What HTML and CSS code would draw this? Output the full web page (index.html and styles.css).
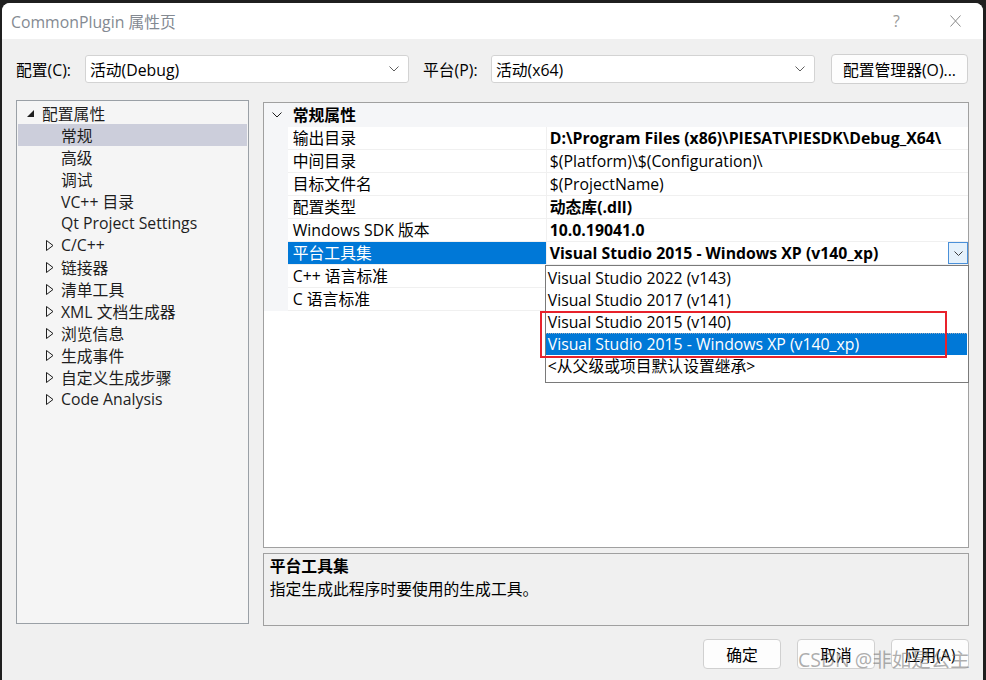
FILE: index.html
```html
<!DOCTYPE html>
<html lang="zh-CN">
<head>
<meta charset="utf-8">
<title>CommonPlugin 属性页</title>
<link rel="stylesheet" href="styles.css">
</head>
<body>
<div class="screen">
  <div class="window">
    <div class="titlebar">
      <span class="title">CommonPlugin 属性页</span>
      <span class="help">?</span>
      <span class="close"><svg width="11" height="12" viewBox="0 0 11 12"><path d="M0.5 0.5L10.5 11.5M10.5 0.5L0.5 11.5" stroke="#8a8a8a" stroke-width="1" fill="none"/></svg></span>
    </div>
    <div class="content">
      <div class="configbar">
        <span class="lbl lbl1">配置(C):</span>
        <div class="combo"><span>活动(Debug)</span><svg class="chev" width="10" height="6" viewBox="0 0 10 6"><path d="M0.5 0.5L5 5L9.5 0.5" stroke="#5f5f5f" fill="none"/></svg></div>
        <span class="lbl lbl2">平台(P):</span>
        <div class="combo"><span>活动(x64)</span><svg class="chev" width="10" height="6" viewBox="0 0 10 6"><path d="M0.5 0.5L5 5L9.5 0.5" stroke="#5f5f5f" fill="none"/></svg></div>
        <button class="btn mgr">配置管理器(O)...</button>
      </div>
      <div class="main">
        <div class="tree">
          <div class="node root"><svg class="exp" width="7" height="7" viewBox="0 0 7 7"><polygon points="7,0 7,7 0,7" fill="#1e1e1e"/></svg><span>配置属性</span></div>
          <div class="node leaf sel"><span>常规</span></div>
          <div class="node leaf"><span>高级</span></div>
          <div class="node leaf"><span>调试</span></div>
          <div class="node leaf"><span>VC++ 目录</span></div>
          <div class="node leaf"><span>Qt Project Settings</span></div>
          <div class="node child"><svg class="col" width="8" height="11" viewBox="0 0 8 11"><polygon points="0.5,0.5 7,5.5 0.5,10.5" fill="none" stroke="#1e1e1e"/></svg><span>C/C++</span></div>
          <div class="node child"><svg class="col" width="8" height="11" viewBox="0 0 8 11"><polygon points="0.5,0.5 7,5.5 0.5,10.5" fill="none" stroke="#1e1e1e"/></svg><span>链接器</span></div>
          <div class="node child"><svg class="col" width="8" height="11" viewBox="0 0 8 11"><polygon points="0.5,0.5 7,5.5 0.5,10.5" fill="none" stroke="#1e1e1e"/></svg><span>清单工具</span></div>
          <div class="node child"><svg class="col" width="8" height="11" viewBox="0 0 8 11"><polygon points="0.5,0.5 7,5.5 0.5,10.5" fill="none" stroke="#1e1e1e"/></svg><span>XML 文档生成器</span></div>
          <div class="node child"><svg class="col" width="8" height="11" viewBox="0 0 8 11"><polygon points="0.5,0.5 7,5.5 0.5,10.5" fill="none" stroke="#1e1e1e"/></svg><span>浏览信息</span></div>
          <div class="node child"><svg class="col" width="8" height="11" viewBox="0 0 8 11"><polygon points="0.5,0.5 7,5.5 0.5,10.5" fill="none" stroke="#1e1e1e"/></svg><span>生成事件</span></div>
          <div class="node child"><svg class="col" width="8" height="11" viewBox="0 0 8 11"><polygon points="0.5,0.5 7,5.5 0.5,10.5" fill="none" stroke="#1e1e1e"/></svg><span>自定义生成步骤</span></div>
          <div class="node child"><svg class="col" width="8" height="11" viewBox="0 0 8 11"><polygon points="0.5,0.5 7,5.5 0.5,10.5" fill="none" stroke="#1e1e1e"/></svg><span>Code Analysis</span></div>
        </div>
        <div class="right">
          <div class="grid">
            <div class="ghead"><span class="gutter-h"><svg width="10" height="6" viewBox="0 0 10 6"><path d="M0.5 0.5L5 5L9.5 0.5" stroke="#1e1e1e" fill="none"/></svg></span><span class="gtitle">常规属性</span></div>
            <div class="grow"><span class="gut"></span><span class="gname">输出目录</span><span class="gval b">D:\Program Files (x86)\PIESAT\PIESDK\Debug_X64\</span></div>
            <div class="grow"><span class="gut"></span><span class="gname">中间目录</span><span class="gval">$(Platform)\$(Configuration)\</span></div>
            <div class="grow"><span class="gut"></span><span class="gname">目标文件名</span><span class="gval">$(ProjectName)</span></div>
            <div class="grow"><span class="gut"></span><span class="gname">配置类型</span><span class="gval b">动态库(.dll)</span></div>
            <div class="grow"><span class="gut"></span><span class="gname">Windows SDK 版本</span><span class="gval b">10.0.19041.0</span></div>
            <div class="grow active"><span class="gut"></span><span class="gname">平台工具集</span><span class="gval b"><span class="vtext">Visual Studio 2015 - Windows XP (v140_xp)</span><span class="ddbtn"><svg width="9" height="5" viewBox="0 0 9 5"><path d="M0.5 0.5L4.5 4.5L8.5 0.5" stroke="#3c3c3c" fill="none"/></svg></span></span></div>
            <div class="grow"><span class="gut"></span><span class="gname">C++ 语言标准</span><span class="gval"></span></div>
            <div class="grow"><span class="gut"></span><span class="gname">C 语言标准</span><span class="gval"></span></div>
            <div class="ddlist">
              <div class="opt">Visual Studio 2022 (v143)</div>
              <div class="opt">Visual Studio 2017 (v141)</div>
              <div class="opt">Visual Studio 2015 (v140)</div>
              <div class="opt on">Visual Studio 2015 - Windows XP (v140_xp)</div>
              <div class="opt">&lt;从父级或项目默认设置继承&gt;</div>
            </div>
          </div>
          <div class="desc">
            <div class="dtitle">平台工具集</div>
            <div class="dtext">指定生成此程序时要使用的生成工具。</div>
          </div>
        </div>
      </div>
      <div class="buttons">
        <button class="btn act">确定</button>
        <button class="btn act">取消</button>
        <button class="btn act">应用(A)</button>
      </div>
    </div>
  </div>
  <div class="redbox"></div>
  <div class="watermark">CSDN @非如是公主</div>
</div>
</body>
</html>
```

FILE: styles.css
```css
* { box-sizing: border-box; }
html, body { margin: 0; padding: 0; }
body {
  background: #1f1f1f;
  font-family: "Open Sans", "Noto Sans CJK SC", sans-serif;
  font-size: 15.8px;
  color: #000;
  overflow: hidden;
}
.screen {
  position: relative;
  width: 986px;
  height: 680px;
  padding: 3px 3px 0 2px;
}
.window {
  width: 981px;
  height: 677px;
  background: #f0f0f0;
  border-radius: 8px 8px 0 0;
  overflow: hidden;
}
.titlebar {
  height: 36px;
  background: #fff;
  display: flex;
  align-items: center;
  padding-left: 9px;
  color: #848a92;
}
.title { flex: 1; }
.help { color: #9a9a9a; width: 57px; }
.close { width: 33px; display: flex; }
.content {
  padding: 15px 14px 0 14px;
}
.configbar {
  display: flex;
  align-items: center;
  height: 30px;
}
.lbl { white-space: nowrap; }
.lbl1 { width: 69px; }
.lbl2 { width: 68px; margin-left: 14px; }
.combo {
  width: 324px;
  height: 28px;
  background: #fff;
  border: 1px solid #d3d3d3;
  border-radius: 3px;
  display: flex;
  align-items: center;
  justify-content: space-between;
  padding: 0 9px 0 4px;
}
.btn {
  font-family: inherit;
  font-size: 15.8px;
  color: #000;
  background: #fdfdfd;
  border: 1px solid #d0d0d0;
  border-radius: 4px;
  height: 30px;
  padding: 0;
}
.mgr { width: 137px; margin-left: 16px; }
.main {
  display: flex;
  margin-top: 16px;
  height: 526px;
}
.tree {
  width: 233px;
  height: 524px;
  background: #f5f5f5;
  border: 1px solid #9aa0a6;
  padding: 1px 1px 0;
  color: #1e1e1e;
}
.node {
  height: 22px;
  display: flex;
  align-items: center;
  white-space: nowrap;
}
.root { padding-left: 9px; }
.root .exp { margin-right: 8px; }
.leaf { padding-left: 43px; }
.child { padding-left: 28px; }
.child .col { margin-right: 7px; }
.sel { background: #cccedb; }
.right {
  margin-left: 14px;
  width: 707px;
  display: flex;
  flex-direction: column;
}
.grid {
  position: relative;
  margin-top: 2px;
  height: 446px;
  background: #fff;
  border: 1px solid #a0a0a0;
}
.ghead {
  height: 24px;
  background: #f5f6f8;
  display: flex;
  align-items: center;
}
.gutter-h {
  width: 24px;
  display: flex;
  justify-content: center;
  padding-left: 2px;
}
.gtitle { font-weight: 700; padding-left: 5px; line-height: 22px; }
.grow {
  height: 23px;
  display: flex;
}
.gut { width: 24px; background: #f5f6f8; }
.gname {
  width: 259px;
  padding-left: 5px;
  line-height: 22px;
  border-bottom: 1px solid #f0f0f0;
  border-right: 1px solid #f0f0f0;
  white-space: nowrap;
}
.gval {
  flex: 1;
  padding-left: 3px;
  line-height: 22px;
  border-bottom: 1px solid #f0f0f0;
  white-space: nowrap;
  display: flex;
}
.b { font-weight: 700; }
.active .gname { background: #0078d7; color: #fff; }
.vtext { flex: 1; }
.ddbtn {
  width: 20px;
  height: 22px;
  border: 1px solid #4a90d9;
  background: #e5f1fb;
  display: flex;
  align-items: center;
  justify-content: center;
}
.ddlist {
  position: absolute;
  left: 281px;
  top: 162px;
  width: 424px;
  height: 118px;
  background: #fff;
  border: 1px solid #7a7a7a;
  padding-top: 1px;
}
.opt {
  height: 22px;
  line-height: 22px;
  padding-left: 2px;
  white-space: nowrap;
  margin-right: 1px;
}
.opt.on {
  background: #0078d7;
  color: #fff;
  border-top: 1px dotted #9ab;
  line-height: 21px;
}
.desc {
  margin-top: 5px;
  height: 73px;
  border: 1px solid #a0a0a0;
  background: #f0f0f0;
  padding: 1px 6px;
}
.dtitle { font-weight: 700; line-height: 23px; }
.dtext { line-height: 23px; }
.buttons {
  display: flex;
  justify-content: flex-end;
  gap: 16px;
  margin-top: 13px;
}
.act { width: 78px; }
.redbox {
  position: absolute;
  left: 540px;
  top: 311px;
  width: 407px;
  height: 47px;
  border: 2px solid #e8222b;
}
.watermark {
  position: absolute;
  left: 798px;
  top: 648px;
  font-size: 19.5px;
  color: rgba(120, 120, 120, 0.6);
  white-space: nowrap;
  line-height: 24px;
}
```
